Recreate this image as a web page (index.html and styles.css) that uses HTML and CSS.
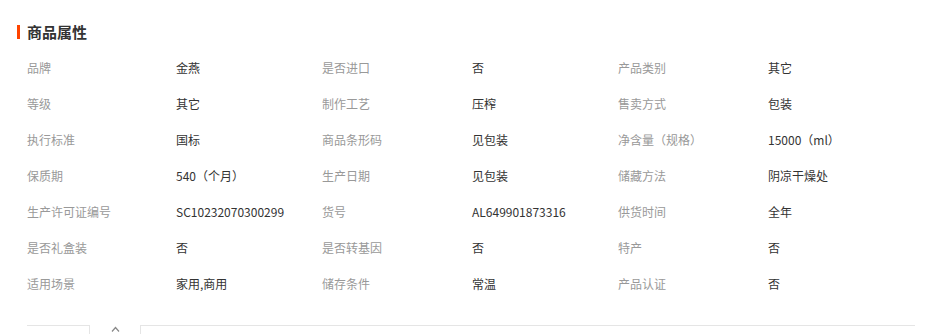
FILE: index.html
```html
<!DOCTYPE html>
<html lang="zh">
<head>
<meta charset="utf-8">
<link rel="stylesheet" href="styles.css">
</head>
<body>
<div class="panel">
  <h2 class="title">商品属性</h2>
  <div class="attrs">
    <span class="k">品牌</span><span class="v">金燕</span>
    <span class="k">是否进口</span><span class="v">否</span>
    <span class="k">产品类别</span><span class="v">其它</span>

    <span class="k">等级</span><span class="v">其它</span>
    <span class="k">制作工艺</span><span class="v">压榨</span>
    <span class="k">售卖方式</span><span class="v">包装</span>

    <span class="k">执行标准</span><span class="v">国标</span>
    <span class="k">商品条形码</span><span class="v">见包装</span>
    <span class="k">净含量（规格）</span><span class="v">15000（ml）</span>

    <span class="k">保质期</span><span class="v">540（个月）</span>
    <span class="k">生产日期</span><span class="v">见包装</span>
    <span class="k">储藏方法</span><span class="v">阴凉干燥处</span>

    <span class="k">生产许可证编号</span><span class="v">SC10232070300299</span>
    <span class="k">货号</span><span class="v">AL649901873316</span>
    <span class="k">供货时间</span><span class="v">全年</span>

    <span class="k">是否礼盒装</span><span class="v">否</span>
    <span class="k">是否转基因</span><span class="v">否</span>
    <span class="k">特产</span><span class="v">否</span>

    <span class="k">适用场景</span><span class="v">家用,商用</span>
    <span class="k">储存条件</span><span class="v">常温</span>
    <span class="k">产品认证</span><span class="v">否</span>
  </div>
  <div class="tabs">
    <div class="tab-left"></div>
    <div class="tab-toggle"><svg width="9" height="6" viewBox="0 0 9 6"><path d="M1 5.5 L4.5 1.5 L8 5.5" fill="none" stroke="#888" stroke-width="1.2"/></svg></div>
    <div class="tab-right"></div>
  </div>
</div>
</body>
</html>
```
FILE: styles.css
```css
* { box-sizing: border-box; }
body {
  margin: 0;
  background: #fff;
  font-family: "Noto Sans CJK SC", "Microsoft YaHei", sans-serif;
  font-size: 12px;
}
.panel {
  padding: 0 12px 0 27px;
}
.title {
  position: relative;
  margin: 0;
  padding-top: 22px;
  height: 49px;
  font-size: 15px;
  font-weight: bold;
  color: #333;
  line-height: 20px;
}
.title::before {
  content: "";
  position: absolute;
  left: -10px;
  top: 25px;
  width: 3px;
  height: 14px;
  background: #ff4400;
}
.attrs {
  display: grid;
  grid-template-columns: 149px 146px 150px 146px 150px 147px;
  grid-auto-rows: 36px;
  align-items: center;
}
.k { color: #999; }
.v { color: #333; }
.tabs {
  margin-top: 24px;
  display: flex;
  height: 9px;
}
.tab-left {
  width: 63px;
  border-top: 1px solid #e5e5e5;
  border-right: 1px solid #e5e5e5;
}
.tab-toggle {
  width: 50px;
  display: flex;
  justify-content: center;
  padding-top: 1px;
}
.tab-right {
  flex: 1;
  border-top: 1px solid #e5e5e5;
  border-left: 1px solid #e5e5e5;
}
```
